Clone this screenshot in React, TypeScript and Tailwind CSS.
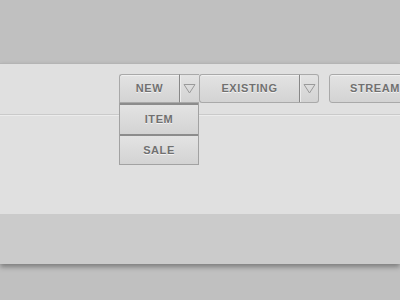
import React from "react";

const Tri = () => (
  <svg width="13" height="11" viewBox="0 0 13 11">
    <path d="M1 1.5 L12 1.5 L6.5 10 Z" fill="none" stroke="#9a9a9a" strokeWidth="1" strokeLinejoin="round" />
  </svg>
);

const label =
  "font-['Liberation_Sans',Arial,sans-serif] font-bold text-[11px] tracking-[0.6px] text-[#707070] [text-shadow:0_1px_0_#f4f4f4]";

const btnBg = "bg-gradient-to-b from-[#e3e3e3] to-[#d3d3d3]";

export default function App() {
  return (
    <div className="w-[400px] h-[300px] overflow-hidden bg-[#c0c0c0] pt-[63px]">
      <div className="w-[400px] shadow-[0_3px_5px_rgba(0,0,0,0.35)] border-t border-[#b4b4b4]">
        <div className="relative h-[150px] bg-[#e0e0e0]">
          <div className="h-[51px] border-b border-[#cacaca] shadow-[0_1px_0_#ececec] pt-[10px] pl-[119px] flex">
            {/* NEW group */}
            <div className="flex h-[29px] shrink-0">
              <div className={`w-[60px] ${btnBg} border border-[#a9a9a9] border-r-0 rounded-tl-[3px] flex items-center justify-center shadow-[inset_0_1px_0_#f0f0f0]`}>
                <span className={label}>NEW</span>
              </div>
              <div className={`w-[20px] ${btnBg} border-l border-l-[#878787] border-t border-t-[#a9a9a9] border-b border-b-[#a9a9a9] flex items-center justify-center shadow-[inset_1px_0_0_#ececec]`}>
                <Tri />
              </div>
            </div>
            {/* EXISTING group */}
            <div className="flex h-[29px] shrink-0">
              <div className={`w-[100px] ${btnBg} border border-[#a9a9a9] border-r-0 rounded-l-[3px] flex items-center justify-center shadow-[inset_0_1px_0_#f0f0f0]`}>
                <span className={label}>EXISTING</span>
              </div>
              <div className={`w-[20px] ${btnBg} border border-[#a9a9a9] border-l-[#878787] rounded-r-[3px] flex items-center justify-center shadow-[inset_1px_0_0_#ececec]`}>
                <Tri />
              </div>
            </div>
            {/* STREAM */}
            <div className={`ml-[10px] w-[92px] h-[29px] shrink-0 ${btnBg} border border-[#a9a9a9] rounded-[3px] flex items-center justify-center shadow-[inset_0_1px_0_#f0f0f0]`}>
              <span className={label}>STREAM</span>
            </div>
          </div>
          {/* dropdown */}
          <div className="absolute left-[119px] top-[39px] w-[80px] border border-[#a2a2a2] border-t-0 flex flex-col">
            <div className={`h-[31px] ${btnBg} border-t-2 border-[#8c8c8c] flex items-center justify-center`}>
              <span className={label}>ITEM</span>
            </div>
            <div className={`h-[30px] ${btnBg} border-t-2 border-[#8c8c8c] flex items-center justify-center`}>
              <span className={label}>SALE</span>
            </div>
          </div>
        </div>
        <div className="h-[50px] bg-[#cbcbcb]" />
      </div>
    </div>
  );
}
